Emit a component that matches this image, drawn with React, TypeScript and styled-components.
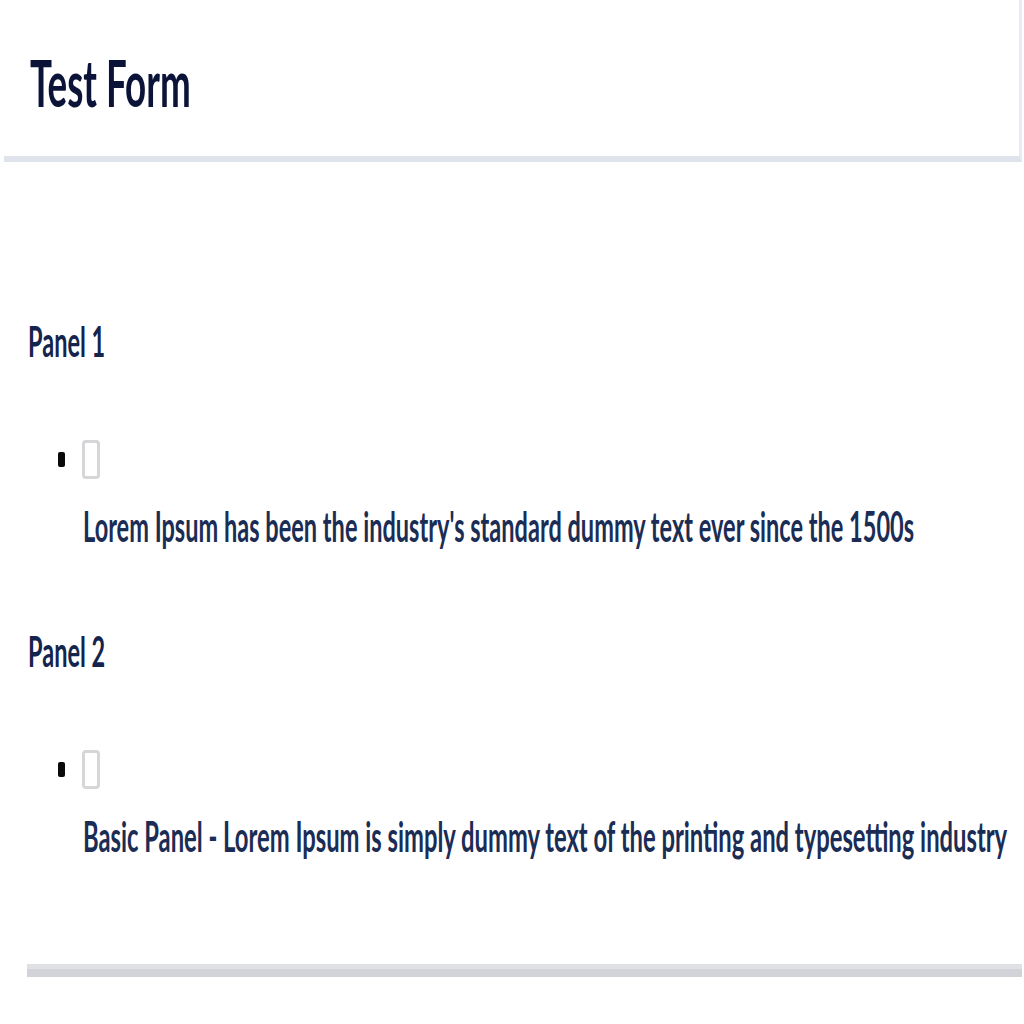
import React from "react";
import styled, { createGlobalStyle } from "styled-components";

const Global = createGlobalStyle`
  html, body { margin: 0; padding: 0; background: #ffffff; overflow: hidden; }
  body { font-family: Lato, "Open Sans", "Liberation Sans", sans-serif; color: #16244a; }
`;

const Page = styled.div`
  width: 1024px;
  height: 1024px;
  display: flex;
  flex-direction: column;
  background: #ffffff;
`;

const Header = styled.header`
  margin-left: 4px;
  width: 1018px;
  height: 162px;
  box-sizing: border-box;
  border-bottom: 6px solid #dfe3ec;
  border-right: 3px solid #e7ebf3;
  display: flex;
  align-items: center;
  padding-left: 26px;
`;

const Condensed = styled.span<{ $scale: number }>`
  display: block;
  white-space: nowrap;
  transform: scaleX(${(p) => p.$scale});
  transform-origin: left center;
`;

const Title = styled(Condensed)`
  font-size: 65px;
  font-weight: 700;
  line-height: 70px;
  color: #0b1438;
  margin-top: 8px;
`;

const Main = styled.main`
  display: flex;
  flex-direction: column;
  padding-left: 28px;
  padding-top: 154px;
`;

const Panel = styled.section`
  display: flex;
  flex-direction: column;
  margin-bottom: 75px;
`;

const Label = styled(Condensed)`
  font-size: 42px;
  font-weight: 700;
  line-height: 50px;
  color: #14244c;
`;

const ItemRow = styled.div`
  display: flex;
  align-items: center;
  gap: 17px;
  margin-top: 74px;
  padding-left: 30px;
`;

const Bullet = styled.span`
  width: 7px;
  height: 15px;
  background: #0a0a0a;
  border-radius: 2px;
`;

const Check = styled.span`
  width: 12px;
  height: 33px;
  border: 3px solid #d6d6d8;
  border-radius: 4px;
  background: #ffffff;
`;

const Desc = styled(Condensed)`
  font-size: 42px;
  font-weight: 700;
  line-height: 50px;
  color: #1b2d55;
  margin-top: 22px;
  margin-left: 55px;
`;

const Rule = styled.div`
  margin-left: 27px;
  width: 995px;
  height: 13px;
  background: linear-gradient(#e0e1e4 0 40%, #d2d3d9 40% 100%);
  margin-top: 28px;
`;

const panels = [
  { label: "Panel 1", text: "Lorem Ipsum has been the industry's standard dummy text ever since the 1500s", scale: 0.561 },
  { label: "Panel 2", text: "Basic Panel - Lorem Ipsum is simply dummy text of the printing and typesetting industry", scale: 0.566 },
];

export default function App() {
  return (
    <Page>
      <Global />
      <Header>
        <Title $scale={0.565}>Test Form</Title>
      </Header>
      <Main>
        {panels.map((p) => (
          <Panel key={p.label}>
            <Label $scale={0.56}>{p.label}</Label>
            <ItemRow>
              <Bullet />
              <Check />
            </ItemRow>
            <Desc $scale={p.scale}>{p.text}</Desc>
          </Panel>
        ))}
      </Main>
      <Rule />
    </Page>
  );
}
